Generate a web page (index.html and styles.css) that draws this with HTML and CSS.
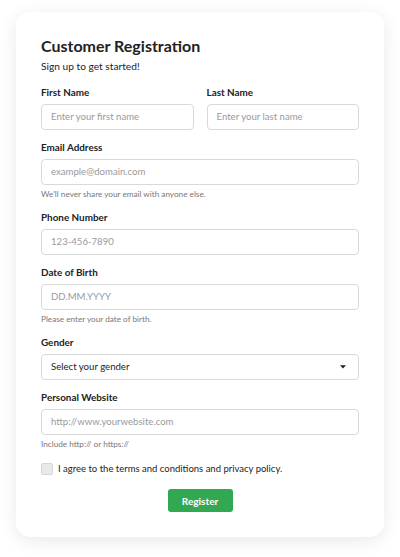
FILE: index.html
```html
<!DOCTYPE html>
<html lang="en">
<head>
<meta charset="utf-8">
<title>Customer Registration</title>
<link rel="stylesheet" href="styles.css">
</head>
<body>
<form class="card">
  <h1 class="title">Customer Registration</h1>
  <p class="subtitle">Sign up to get started!</p>

  <div class="row">
    <div class="field">
      <label class="label">First Name</label>
      <div class="input placeholder">Enter your first name</div>
    </div>
    <div class="field">
      <label class="label">Last Name</label>
      <div class="input placeholder">Enter your last name</div>
    </div>
  </div>

  <div class="field">
    <label class="label">Email Address</label>
    <div class="input placeholder">example@domain.com</div>
    <p class="help">We'll never share your email with anyone else.</p>
  </div>

  <div class="field">
    <label class="label">Phone Number</label>
    <div class="input placeholder">123-456-7890</div>
  </div>

  <div class="field">
    <label class="label">Date of Birth</label>
    <div class="input placeholder">DD.MM.YYYY</div>
    <p class="help">Please enter your date of birth.</p>
  </div>

  <div class="field">
    <label class="label">Gender</label>
    <div class="input select">
      <span>Select your gender</span>
      <svg class="caret" width="6" height="4" viewBox="0 0 6 4"><path d="M0 0.3H6L3 3.6Z" fill="#222"/></svg>
    </div>
  </div>

  <div class="field">
    <label class="label">Personal Website</label>
    <div class="input placeholder">http://www.yourwebsite.com</div>
    <p class="help">Include http:// or https://</p>
  </div>

  <div class="check">
    <span class="box"></span>
    <span class="check-text">I agree to the terms and conditions and privacy policy.</span>
  </div>

  <div class="actions">
    <button type="button" class="btn">Register</button>
  </div>
</form>
</body>
</html>
```

FILE: styles.css
```css
* { box-sizing: border-box; }
html, body { margin: 0; padding: 0; background: #ffffff; }
body {
  padding: 12px 16px 20px;
  font-family: "Lato", "Open Sans", sans-serif;
  color: #222;
}
.card {
  width: 368px;
  background: #fff;
  border-radius: 14px;
  box-shadow: 0 4px 18px rgba(0, 0, 0, 0.09);
  padding: 24px 25px 25px;
}
.title {
  margin: 0;
  font-size: 16px;
  line-height: 20px;
  font-weight: 700;
}
.subtitle {
  margin: 3px 0 12px;
  font-size: 10.2px;
  line-height: 14px;
}
.row {
  display: grid;
  grid-template-columns: 1fr 1fr;
  gap: 13px;
}
.field { margin-bottom: 10px; }
.label {
  display: block;
  font-size: 9.9px;
  line-height: 14px;
  font-weight: 700;
  margin-bottom: 5px;
}
.input {
  height: 26px;
  border: 1px solid #d9d9d9;
  border-radius: 4px;
  padding: 0 9px;
  font-size: 9.6px;
  line-height: 24px;
  display: flex;
  align-items: center;
}
.placeholder { color: #9a9a9a; }
.select {
  justify-content: space-between;
  color: #222;
  padding-right: 12px;
}
.help {
  margin: 3px 0 0;
  font-size: 8.2px;
  line-height: 12px;
  color: #777;
}
.check {
  display: flex;
  align-items: center;
  gap: 5px;
  margin-top: 12px;
}
.box {
  width: 12px;
  height: 12px;
  border: 1px solid #d6d6d6;
  background: #e9e9e9;
  border-radius: 2px;
}
.check-text {
  font-size: 9.5px;
  line-height: 14px;
}
.actions {
  display: flex;
  justify-content: center;
  margin-top: 13px;
}
.btn {
  width: 65px;
  height: 23px;
  border: 0;
  border-radius: 3px;
  background: #33a852;
  color: #fff;
  font-family: inherit;
  font-size: 10px;
  font-weight: 700;
  padding: 0;
}
```
